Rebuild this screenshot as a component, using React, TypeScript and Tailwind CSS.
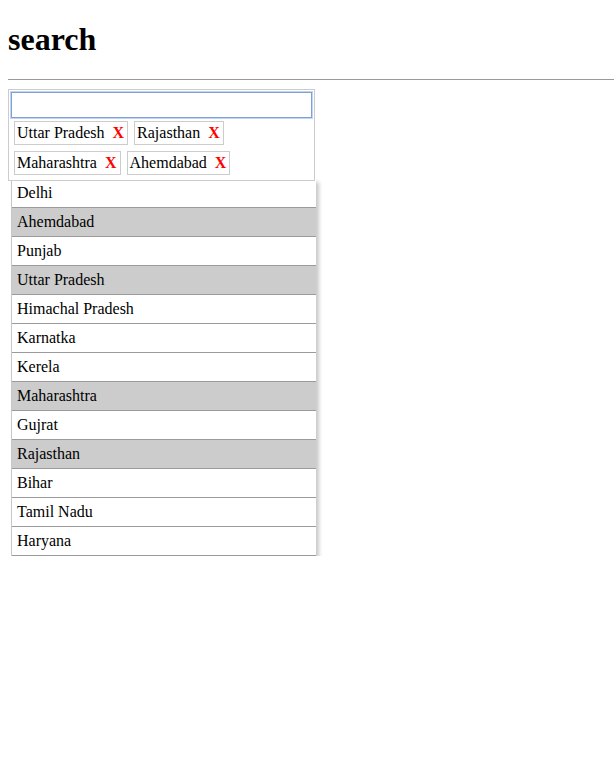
import { useState } from "react";

const states = [
  "Delhi",
  "Ahemdabad",
  "Punjab",
  "Uttar Pradesh",
  "Himachal Pradesh",
  "Karnatka",
  "Kerela",
  "Maharashtra",
  "Gujrat",
  "Rajasthan",
  "Bihar",
  "Tamil Nadu",
  "Haryana",
];

export default function App() {
  const [selected, setSelected] = useState<string[]>([
    "Uttar Pradesh",
    "Rajasthan",
    "Maharashtra",
    "Ahemdabad",
  ]);
  const [query, setQuery] = useState<string>("");

  const toggle = (name: string) => {
    if (selected.includes(name)) {
      setSelected(selected.filter((s) => s !== name));
    } else {
      setSelected([...selected, name]);
    }
  };

  return (
    <div
      className="px-2 text-black text-[16px]"
      style={{ fontFamily: '"Liberation Serif", "Times New Roman", serif' }}
    >
      <h1 className="mt-[21px] mb-[21px] text-[32px] font-bold leading-[37px]">
        search
      </h1>
      <hr className="mr-[-8px] mb-[9px] border-t border-[#9a9a9a]" />
      <div className="relative z-10 w-[307px] border border-[#cccccc] bg-white p-[2px]">
        <input
          autoFocus
          value={query}
          onChange={(e) => setQuery(e.target.value)}
          className="block h-[26px] w-full border border-[#7d9fdc] px-[2px] shadow-[0_0_0_1px_#c3d5f3] outline-none"
        />
        <div className="flex flex-wrap">
          {selected.map((s) => (
            <div
              key={s}
              className="m-[3px] flex items-center border border-[#cccccc] py-[2px] pl-[2px] pr-[3px] leading-[18px]"
            >
              <span>{s}</span>
              <button
                onClick={() => toggle(s)}
                className="ml-[8px] font-bold leading-[18px] text-[#ff0000]"
              >
                X
              </button>
            </div>
          ))}
        </div>
      </div>
      <ul className="relative z-0 ml-[3px] -mt-[2px] w-[305px] border-l border-[#c8c8c8] bg-white shadow-[3px_3px_4px_rgba(0,0,0,0.22)]">
        {states.map((s) => (
          <li
            key={s}
            onClick={() => toggle(s)}
            className={`h-[29px] border-b border-[#9b9b9b] pl-[5px] pt-[5px] leading-[18px] ${
              selected.includes(s) ? "bg-[#cccccc]" : "bg-white"
            }`}
          >
            {s}
          </li>
        ))}
      </ul>
    </div>
  );
}
